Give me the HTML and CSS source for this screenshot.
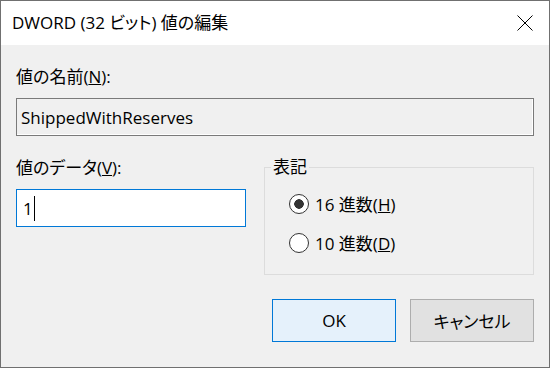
FILE: index.html
```html
<!DOCTYPE html>
<html lang="ja">
<head>
    <meta charset="UTF-8">
    <title>DWORD (32 ビット) 値の編集</title>
    <link rel="stylesheet" href="styles.css">
</head>
<body>
    <div class="dialog">
        <div class="titlebar">
            <span class="title">DWORD (32 ビット) 値の編集</span>
            <svg class="close" width="16" height="16" viewBox="0 0 16 16">
                <path d="M0.5 0.5 L15.5 15.5 M15.5 0.5 L0.5 15.5" stroke="#000" stroke-width="1" fill="none"/>
            </svg>
        </div>

        <div class="content">
            <div class="label">値の名前(<u>N</u>):</div>
            <div class="field readonly">ShippedWithReserves</div>

            <div class="row">
                <div class="col-data">
                    <div class="label">値のデータ(<u>V</u>):</div>
                    <div class="field active">1<span class="caret"></span></div>
                </div>

                <fieldset class="group">
                    <legend>表記</legend>
                    <label class="radio-row">
                        <input type="radio" name="base" checked>
                        <span>16 進数(<u>H</u>)</span>
                    </label>
                    <label class="radio-row">
                        <input type="radio" name="base">
                        <span>10 進数(<u>D</u>)</span>
                    </label>
                </fieldset>
            </div>

            <div class="buttons">
                <button class="btn default">OK</button>
                <button class="btn">キャンセル</button>
            </div>
        </div>
    </div>
</body>
</html>
```

FILE: styles.css
```css
body {
    margin: 0;
    background: #f0f0f0;
    font-family: 'Open Sans', 'Noto Sans CJK JP', sans-serif;
    font-size: 17px;
    font-feature-settings: "palt"; /* narrower kana, like Yu Gothic UI */
    color: #000;
}

.dialog {
    width: 550px;
    height: 368px;
    box-sizing: border-box;
    border: 1px solid #707070;
    background: #f0f0f0;
    overflow: hidden;
}

.titlebar {
    height: 44px;
    background: #fff;
    display: flex;
    align-items: center;
    justify-content: space-between;
    padding: 0 16px 0 11px;
}

.title {
    line-height: 24px;
}

.content {
    padding: 0 15px;
}

.label {
    line-height: 24px;
    margin-top: 20px;
    margin-bottom: 9px;
}

.field {
    height: 38px;
    box-sizing: border-box;
    border: 1px solid #7a7a7a;
    display: flex;
    align-items: center;
    padding-left: 4px;
}

.field.readonly {
    background: #f0f0f0;
    box-shadow: inset -1px -1px 0 #fff; /* sunken edge */
}

.field.active {
    background: #fff;
    border-color: #0078d7;
    padding-left: 6px;
}

.caret {
    display: inline-block;
    width: 1px;
    height: 25px;
    background: #000;
    margin-left: 1px;
}

.row {
    display: flex;
    align-items: flex-start;
    gap: 18px;
}

.col-data {
    width: 230px;
}

.group {
    flex: 1;
    margin: 19px 0 0 0;
    padding: 5px 0 0 24px;
    height: 120px;
    box-sizing: border-box;
    border: 1px solid #dcdcdc;
}

.group legend {
    padding: 0 2px;
    margin-left: -18px;
    line-height: 24px;
}

.radio-row {
    display: flex;
    align-items: center;
    gap: 6px;
    height: 39px;
}

.radio-row input {
    appearance: none;
    -webkit-appearance: none;
    margin: 0;
    width: 20px;
    height: 20px;
    box-sizing: border-box;
    border: 1px solid #333;
    border-radius: 50%;
    background: #fff;
}

.radio-row input:checked {
    background: radial-gradient(circle, #333 0, #333 4.5px, #fff 5px);
}

.buttons {
    display: flex;
    justify-content: flex-end;
    gap: 14px;
    margin-top: 24px;
}

.btn {
    width: 124px;
    height: 43px;
    font: inherit;
    color: #000;
    background: #e1e1e1;
    border: 1px solid #adadad;
    padding: 0;
}

.btn.default {
    background: #e5f1fb;
    border-color: #0078d7;
}
```
